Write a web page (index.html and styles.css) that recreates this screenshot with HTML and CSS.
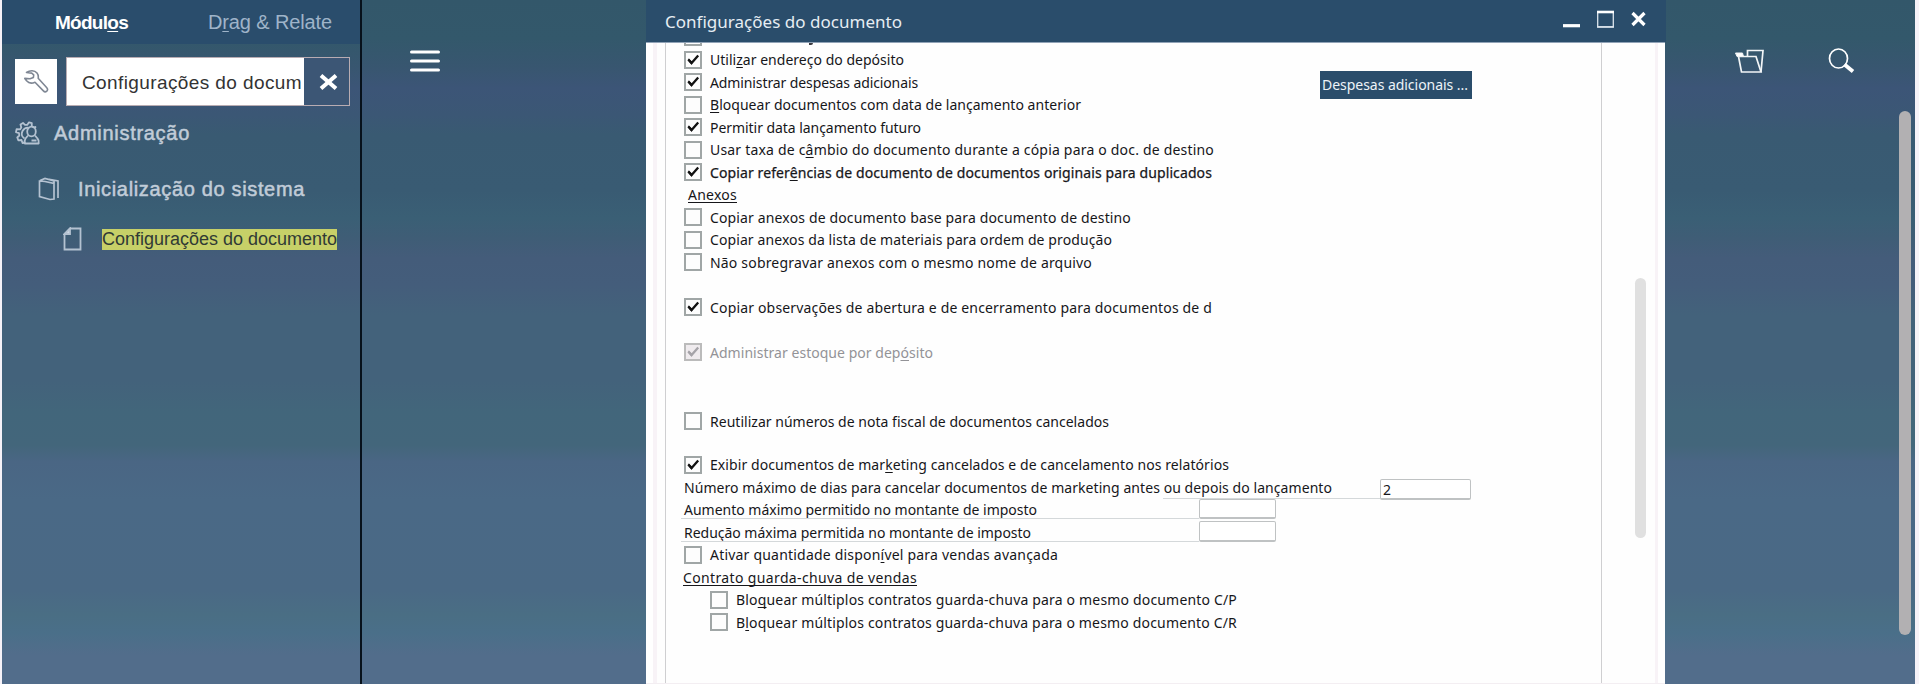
FILE: index.html
```html
<!DOCTYPE html>
<html lang="pt-BR">
<head>
<meta charset="utf-8">
<title>Configurações do documento</title>
<link rel="stylesheet" href="styles.css">
</head>
<body>
<svg class="defs" width="0" height="0">
  <symbol id="check" viewBox="0 0 18 18"><path d="M4.2 8.4 7.6 12 14.2 4.6" fill="none" stroke="currentColor" stroke-width="2.3"/><path d="M4.6 7.6v3l3 3.2 1.2-2.6z" fill="currentColor"/></symbol>
</svg>
<div class="app">
  <aside class="sidebar">
    <nav class="tabs">
      <span class="tab tab-on" data-width="73">Módul<u>o</u>s</span>
      <span class="tab" data-width="124">D<u>r</u>ag &amp; Relate</span>
    </nav>
    <div class="search">
      <button class="tool">
        <svg width="26" height="26" viewBox="0 0 26 26" fill="none" stroke="#7f8794" stroke-width="1.6" stroke-linejoin="round"><path d="M3.500 3.500C7 1 11.500 1 14 4c1.300 1.700 1.500 3.500 1.200 5.300l8.600 9.400c1 1.200.9 2.500 0 3.400-1 .9-2.400.9-3.400-.2L12 13.200c-2.800 1.300-6.300 1.100-8.400-1.400L1.800 9.400l5.200.3 3.400-1.300.3-2.600-2-1.700z"/></svg>
      </button>
      <div class="field">
        <span class="query" data-width="220">Configurações do docum</span>
        <span class="clear"><svg width="19" height="16" viewBox="0 0 19 16"><path d="M2 1.500 17 14.500M17 1.500 2 14.500" stroke="#fff" stroke-width="4"/></svg></span>
      </div>
    </div>
    <div class="node node-1">
      <svg width="25" height="24" viewBox="0 0 25 24" fill="none" stroke="#b4c2d1" stroke-width="1.800" stroke-linejoin="round"><path d="M10.500 21.500 7.500 22 6.500 19l-3.200.3-1-2.800 2-2-.3-2.300L1 11.200l.6-3 3.400.2 1.300-2-.8-3L8 1.900l2 2h2.200L14 1.300l2.800.9-.1 2.800 1.800 1.300 2.700-.3"/><path d="M9.500 17.500C6.700 15.800 6.200 12.700 7.500 10c1.300-2.400 3.500-3.500 6-3.300"/><ellipse cx="16.500" cy="10.500" rx="4.300" ry="4.900"/><path d="M13 14.500 10.500 17.500c-.9 1.500-1 3.500-.8 5h14c.2-2-.1-3.900-1.200-5L20 14.500M16.500 19.500h5"/></svg>
      <span data-width="136">Administração</span>
    </div>
    <div class="node node-2">
      <svg width="22" height="24" viewBox="0 0 22 24" fill="none" stroke="#b4c2d1" stroke-width="1.700"><path d="M3.500 3.500 1.500 4v15.500L12 22.500 16 22V6.500L7 4.500 1.500 4M2 3.500 7 1.500l9 2.500v4M7 1.500 20 4v17"/></svg>
      <span data-width="227">Inicialização do sistema</span>
    </div>
    <div class="node node-3">
      <svg width="19" height="24" viewBox="0 0 19 24" fill="none" stroke="#b4c2d1" stroke-width="1.800"><path d="M7 1.500h10.500v21h-16V7z"/><path d="M7 1.500V7H1.500z" fill="#d0dae4"/></svg>
      <span class="hit" data-width="235">Configurações do documento</span>
    </div>
  </aside>

  <div class="left-space">
    <svg width="30" height="24" viewBox="0 0 30 24"><path d="M1.500 3h27M1.500 12h27M1.500 21h27" stroke="#fff" stroke-width="3" stroke-linecap="round"/></svg>
  </div>

  <main class="window">
    <header class="titlebar">
      <span class="title" data-width="237">Configurações do documento</span>
      <div class="controls">
        <svg width="17" height="18" viewBox="0 0 17 18"><path d="M0 15.700h17" stroke="#fff" stroke-width="3.200"/></svg>
        <svg width="17" height="18" viewBox="0 0 17 18"><path d="M.7 1v16h15.600V1" fill="none" stroke="#dbe4ec" stroke-width="1.300"/><path d="M0 2h17" stroke="#fff" stroke-width="2.600"/><path d="M0 16.800h17" stroke="#dbe4ec" stroke-width="1.300"/></svg>
        <svg width="15" height="18" viewBox="0 0 15 18"><path d="M1.500 3 13.500 15M13.500 3 1.500 15" stroke="#fff" stroke-width="3.200"/></svg>
      </div>
    </header>
    <div class="frame">
      <div class="pane">
        <div class="row-cut"><i class="box-end"></i><i class="tail"></i></div>
        <div class="row"><i class="box"><svg><use href="#check"/></svg></i><span data-width="194">Utili<u>z</u>ar endereço do depósito</span></div>
        <div class="row"><i class="box"><svg><use href="#check"/></svg></i><span data-width="208">Administrar despesas adicionais</span><button class="extra"><span data-width="146">Despesas adicionais ...</span></button></div>
        <div class="row"><i class="box"></i><span data-width="371"><u>B</u>loquear documentos com data de lançamento anterior</span></div>
        <div class="row"><i class="box"><svg><use href="#check"/></svg></i><span data-width="211">Permitir data lançamento futuro</span></div>
        <div class="row"><i class="box"></i><span data-width="504">Usar taxa de c<u>â</u>mbio do documento durante a cópia para o doc. de destino</span></div>
        <div class="row strong"><i class="box"><svg><use href="#check"/></svg></i><span data-width="502">Copiar refer<u>ê</u>ncias de documento de documentos originais para duplicados</span></div>
        <div class="row heading"><span class="inset" data-width="49">Anexos</span></div>
        <div class="row"><i class="box"></i><span data-width="421">Copiar anexos de documento base para documento de destino</span></div>
        <div class="row"><i class="box"></i><span data-width="402">Copiar anexos da lista de materiais para ordem de produção</span></div>
        <div class="row"><i class="box"></i><span data-width="382">Não sobregravar anexos com o mesmo nome de arquivo</span></div>
        <div class="row gap-a"><i class="box"><svg><use href="#check"/></svg></i><span data-width="502">Copiar observações de abertura e de encerramento para documentos de d</span></div>
        <div class="row gap-a off"><i class="box"><svg><use href="#check"/></svg></i><span data-width="223">Administrar estoque por dep<u>ó</u>sito</span></div>
        <div class="row gap-b"><i class="box"></i><span data-width="399">Reutilizar números de nota fiscal de documentos cancelados</span></div>
        <div class="row gap-c"><i class="box"><svg><use href="#check"/></svg></i><span data-width="519">Exibir documentos de mar<u>k</u>eting cancelados e de cancelamento nos relatórios</span></div>
        <div class="row entry"><span data-width="648">Número máximo de dias para cancelar documentos de marketing antes ou depois do lançamento</span><b class="rule rule-days"></b><b class="input input-days">2</b></div>
        <div class="row entry"><span data-width="353">Aumento máximo permitido no montante de imposto</span><b class="rule"></b><b class="input"></b></div>
        <div class="row entry"><span data-width="347">Redução máxima permitida no montante de imposto</span><b class="rule"></b><b class="input input-low"></b></div>
        <div class="row"><i class="box"></i><span data-width="348">Ativar quantidade dispon<u>í</u>vel para vendas avançada</span></div>
        <div class="row heading"><span data-width="234">Contrato guarda-chuva de vendas</span></div>
        <div class="row sub"><i class="box"></i><span data-width="501">Blo<u>q</u>uear múltiplos contratos guarda-chuva para o mesmo documento C/P</span></div>
        <div class="row sub"><i class="box"></i><span data-width="501">B<u>l</u>oquear múltiplos contratos guarda-chuva para o mesmo documento C/R</span></div>
      </div>
      <div class="track"><div class="thumb"></div></div>
    </div>
  </main>

  <div class="right-space">
    <svg width="30" height="26" viewBox="0 0 30 26" fill="none" stroke="#f2f5f7" stroke-width="1.700"><path d="M3.500 8.500h17.500L26 24H6.500z"/><path d="M.5 5h7l1 3.500H2z" fill="#fff" stroke-width="1"/><path d="M12.500 8.500V2.500H28L26 24"/></svg>
    <svg width="27" height="26" viewBox="0 0 27 26" fill="none" stroke="#fff"><ellipse cx="10.500" cy="10.500" rx="9" ry="9.500" stroke-width="1.700"/><path d="M16.500 16.500 25 23.500" stroke-width="3.800"/></svg>
  </div>
  <div class="page-track"><div class="page-thumb"></div></div>
</div>
<script src="app.js"></script>
</body>
</html>
```
FILE: styles.css
```css
* { box-sizing: border-box; }
body { margin: 0; background: #f6f2f8; overflow: hidden; }
.defs { position: absolute; }
u { text-underline-offset: 2px; text-decoration-thickness: 1px; text-decoration-skip-ink: none; }
svg { display: block; flex: none; }

.app {
  display: flex; width: 1913px; height: 684px; margin-left: 2px;
  background: linear-gradient(180deg, #33576a 0, #33586b 38px, #385670 68px, #3c5577 88px, #3b5775 115px, #395a72 135px, #395b73 190px, #3a5f75 218px, #3f5d76 238px, #445c7a 258px, #445d7b 285px, #43627b 315px, #43627b 380px, #42667b 412px, #43667b 445px, #4a6684 462px, #4a6986 500px, #4a6985 590px, #4a6e84 615px, #4a6f89 633px, #526d8b 655px, #526d8b 684px);
}

.sidebar { width: 360px; border-right: 2px solid #07111b; font: 20px "Liberation Sans", Arial, sans-serif; color: #c1ccd8; overflow: hidden; white-space: nowrap; }
.tabs { display: flex; height: 44px; padding-left: 53px; gap: 80px; background: #2a4d6c; line-height: 45px; }
.tab { flex: none; color: #9fb4c9; }
.tab-on { color: #fff; font-size: 19px; font-weight: bold; }
.search { display: flex; align-items: center; gap: 9px; padding: 13px 0 0 13px; }
.tool { display: grid; place-items: center; width: 42px; height: 45px; padding: 0; border: 0; background: #fff; }
.field { display: flex; width: 284px; height: 49px; border: 1px solid #b8acb2; background: #fff; color: #333; font-size: 19px; line-height: 49px; }
.query { flex: none; width: 222px; margin-left: 15px; overflow: hidden; }
.clear { display: grid; flex: 1; place-items: center; padding-left: 3px; background: #3c5675; }
.node { display: flex; align-items: center; }
.node span { -webkit-text-stroke: .5px #c1ccd8; }
.node-1 { padding-left: 13px; margin-top: 15px; gap: 14px; }
.node-2 { padding-left: 36px; margin-top: 32px; gap: 18px; }
.node-3 { padding-left: 61px; margin-top: 26px; gap: 20px; }
.node-3 .hit { -webkit-text-stroke: 0; height: 21px; line-height: 21px; background: #c7d068; color: #303a35; font-size: 18px; }

.left-space { width: 284px; padding: 48.5px 0 0 48px; }

.window { display: flex; flex-direction: column; width: 1020px; font: 14px "Noto Sans", "Open Sans", sans-serif; }
.titlebar { display: flex; flex: none; justify-content: space-between; height: 42px; padding: 0 20px 0 19px; background: #2a4d6b; color: #e6edf3; }
.title { font-size: 17px; line-height: 43px; }
.controls { display: flex; gap: 17px; padding-top: 10px; }
.frame { display: flex; flex: 1; width: 1019px; min-height: 0; padding: 0 7px; border-top: 1px solid #91a3b7; border-bottom: 1px solid #f3eef2; background: linear-gradient(90deg, #fff 7px, #f8f3f7 7px 11px, #fefefe 11px 1009px, #f8f3f7 1009px 1012px, #fff 1012px); }
.pane { width: 937px; margin-left: 12px; padding-left: 18px; border: solid #cfcfd1; border-width: 0 1px; overflow: hidden; color: #16161a; white-space: nowrap; }
.row { display: flex; align-items: center; gap: 8px; height: 22.5px; line-height: 23px; }
.row > span { flex: none; }
.row-cut { display: flex; gap: 107px; height: 5.5px; }
.box-end { width: 18px; height: 3px; border: 2px solid #a0a6a6; border-top: 0; }
.tail { width: 4px; height: 2px; border-radius: 0 0 2px; background: #3a3a40; }
.box { display: block; flex: none; width: 18px; height: 18px; border: 2px solid #a0a6a6; background: #fdfdfd; color: #111; }
.box svg { width: 18px; height: 18px; margin: -2px; }
.strong { -webkit-text-stroke: .25px #16161a; }
.heading { text-decoration: underline; text-underline-offset: 2px; text-decoration-skip-ink: none; }
.heading > span { margin-left: -1px; }
.heading > .inset { margin-left: 4px; }
.gap-a { margin-top: 22.5px; }
.gap-b { margin-top: 46.5px; }
.gap-c { margin-top: 21px; }
.off { color: #939397; }
.off .box { background: #efebee; border-color: #bbb; color: #a5a3a8; }
.sub { padding-left: 26px; }
.extra { align-self: flex-start; flex: none; width: 152px; height: 28px; margin: 0 0 0 394px; padding: 0 2px; border: 0; background: #2a4d6b; color: #edf3f8; font: 14px/28px "Noto Sans", sans-serif; text-align: left; }
.extra span { display: inline-block; }
.entry { position: relative; }
.rule { position: absolute; left: -3px; bottom: 2px; width: 518px; height: 1px; background: #d4d8da; }
.rule-days { left: 479px; bottom: 0; width: 217px; }
.input { position: absolute; left: 515px; top: 0; width: 77px; height: 20px; border: 1px solid #bfc2c3; border-bottom-width: 2px; border-radius: 2px; background: #fff; font-weight: normal; line-height: 20px; padding-left: 2px; }
.input-days { left: 696px; top: 3px; width: 91px; height: 21px; }
.input-low { height: 21px; }
.track { flex: 1; padding: 235px 0 0 33px; }
.thumb { width: 11px; height: 260px; border-radius: 6px; background: #e0e0e0; }

.right-space { display: flex; width: 233px; gap: 63px; padding: 48px 0 0 69px; }
.page-track { flex: none; width: 16px; padding-top: 111px; }
.page-thumb { width: 12px; height: 524px; border-radius: 6px; background: #b2b0b2; }
```
FILE: app.js
```js
// Spread the letters of each label over the width it is given.
document.querySelectorAll('[data-width]').forEach(function (label) {
  var range = document.createRange();
  range.selectNodeContents(label);
  var natural = range.getBoundingClientRect().width;
  var target = Number(label.dataset.width);
  label.style.letterSpacing = (target - natural) / label.textContent.length + 'px';
});
```
